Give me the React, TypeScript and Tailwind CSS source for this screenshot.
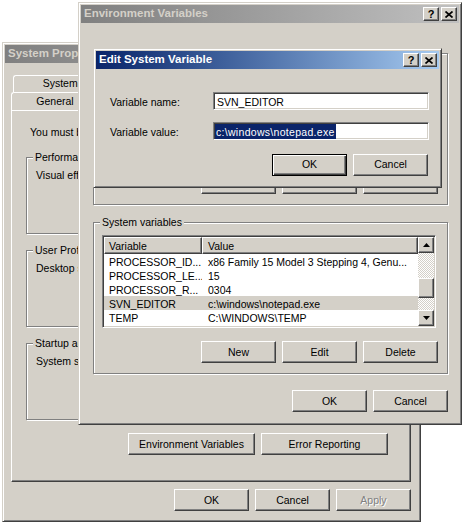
import type { ReactNode } from "react"

const raised =
  "bg-[#d4d0c8] border border-t-white border-l-white border-r-[#404040] border-b-[#404040] shadow-[inset_-1px_-1px_#808080]"
const sunken =
  "border border-t-[#808080] border-l-[#808080] border-r-white border-b-white shadow-[inset_1px_1px_#404040,inset_-1px_-1px_#d4d0c8]"
const groupBox =
  "min-w-0 border border-[#808080] shadow-[inset_1px_1px_#fff,1px_1px_#fff]"

function Btn({ children, wide, def, disabled }: { children: ReactNode; wide?: boolean; def?: boolean; disabled?: boolean }) {
  return (
    <button
      type="button"
      className={`${wide ? "w-[127px]" : "w-[75px]"} h-[22px] pt-[1px] flex items-center justify-center shrink-0 ${
        def
          ? "bg-[#d4d0c8] border border-black shadow-[inset_1px_1px_#fff,inset_-1px_-1px_#404040,inset_-2px_-2px_#808080]"
          : raised
      } ${disabled ? "text-[#808080] [text-shadow:1px_1px_#fff]" : "text-black"}`}
    >
      {children}
    </button>
  )
}

function TitleBar({ title, active }: { title: string; active?: boolean }) {
  return (
    <div
      className={`h-[18px] shrink-0 flex items-center justify-between pl-[3px] pr-[2px] ${
        active
          ? "bg-linear-to-r from-[#0a246a] to-[#a6caf0] text-white"
          : "bg-linear-to-r from-[#808080] to-[#c0c0c0] text-[#d4d0c8]"
      }`}
    >
      <span className="font-bold text-[11.5px] leading-none whitespace-nowrap">{title}</span>
      <div className="flex gap-[2px]">
        <div className={`w-[16px] h-[14px] ${raised} flex items-center justify-center text-black text-[11px] font-bold leading-none`}>?</div>
        <div className={`w-[16px] h-[14px] ${raised} flex items-center justify-center`}>
          <svg width="8" height="7" viewBox="0 0 8 7">
            <path d="M0.5 0.5 7.5 6.5 M7.5 0.5 0.5 6.5" stroke="#000" strokeWidth="1.7" fill="none" />
          </svg>
        </div>
      </div>
    </div>
  )
}

function Win({ className, children }: { className: string; children: ReactNode }) {
  return (
    <div
      className={`absolute flex flex-col bg-[#d4d0c8] border border-t-[#d4d0c8] border-l-[#d4d0c8] border-r-[#404040] border-b-[#404040] shadow-[inset_1px_1px_#fff,inset_-1px_-1px_#808080] p-[2px] ${className}`}
    >
      {children}
    </div>
  )
}

function Arrow({ down }: { down?: boolean }) {
  return (
    <svg width="7" height="4" viewBox="0 0 7 4">
      <path d={down ? "M0 0 7 0 3.5 4Z" : "M3.5 0 7 4 0 4Z"} fill="#000" />
    </svg>
  )
}

type Row = { name: string; value: string; sel?: boolean }

const sysRows: Row[] = [
  { name: "PROCESSOR_ID...", value: "x86 Family 15 Model 3 Stepping 4, Genu..." },
  { name: "PROCESSOR_LE...", value: "15" },
  { name: "PROCESSOR_R...", value: "0304" },
  { name: "SVN_EDITOR", value: "c:\\windows\\notepad.exe", sel: true },
  { name: "TEMP", value: "C:\\WINDOWS\\TEMP" },
  { name: "TMP", value: "C:\\WINDOWS\\TEMP" },
]

const userRows: Row[] = [
  { name: "TEMP", value: "C:\\Documents and Settings\\Admin\\Local..." },
  { name: "TMP", value: "C:\\Documents and Settings\\Admin\\Local..." },
]

function ListView({ rows }: { rows: Row[] }) {
  return (
    <div className={`ml-[8px] mr-[11px] mt-[6px] h-[93px] ${sunken} p-[1px] bg-white flex`}>
      <div className="flex-1 flex flex-col overflow-hidden">
        <div className="flex h-[17px] shrink-0">
          <div className={`w-[98px] ${raised} pl-[4px] leading-[17px] overflow-hidden`}>Variable</div>
          <div className={`flex-1 ${raised} pl-[5px] leading-[17px] overflow-hidden`}>Value</div>
        </div>
        {rows.map((r) => (
          <div key={r.name} className={`flex h-[14px] shrink-0 leading-[16px] whitespace-nowrap ${r.sel ? "bg-[#d4d0c8]" : ""}`}>
            <div className="w-[98px] pl-[5px] overflow-hidden">{r.name}</div>
            <div className="flex-1 pl-[6px] overflow-hidden">{r.value}</div>
          </div>
        ))}
      </div>
      <div className="w-[16px] flex flex-col">
        <div className={`h-[16px] ${raised} flex items-center justify-center`}>
          <Arrow />
        </div>
        <div className="flex-1 flex flex-col bg-[repeating-conic-gradient(#d4d0c8_0_25%,#fff_0_50%)] bg-[length:2px_2px]">
          <div className="h-[25px]" />
          <div className={`h-[20px] ${raised}`} />
        </div>
        <div className={`h-[16px] ${raised} flex items-center justify-center`}>
          <Arrow down />
        </div>
      </div>
    </div>
  )
}

function EnvGroup({ label, rows, className }: { label: string; rows: Row[]; className: string }) {
  return (
    <fieldset className={`${groupBox} ${className}`}>
      <legend className="ml-[6px] px-[2px] leading-[13px] bg-[#d4d0c8]">{label}</legend>
      <ListView rows={rows} />
      <div className="flex justify-end gap-[6px] mt-[13px] pr-[9px] pb-[10px]">
        <Btn>New</Btn>
        <Btn>Edit</Btn>
        <Btn>Delete</Btn>
      </div>
    </fieldset>
  )
}

function PropGroup({ label, text, className }: { label: string; text: string; className: string }) {
  return (
    <fieldset className={`${groupBox} ${className}`}>
      <legend className="ml-[6px] px-[2px] leading-[13px] bg-[#d4d0c8]">{label}</legend>
      <div className="h-[69px] flex flex-col pl-[9px] pr-[8px] pt-[5px] pb-[8px]">
        <div className="leading-[13px] whitespace-nowrap">{text}</div>
        <div className="mt-auto flex justify-end">
          <Btn>Settings</Btn>
        </div>
      </div>
    </fieldset>
  )
}

function Tab({ children, w }: { children: ReactNode; w: string }) {
  return (
    <div
      className={`${w} h-full flex items-center justify-center border-t border-l border-r border-t-white border-l-white border-r-[#404040] rounded-t-[3px] shadow-[inset_-1px_0_#808080] bg-[#d4d0c8] whitespace-nowrap`}
    >
      {children}
    </div>
  )
}

export default function App() {
  return (
    <div className="relative w-[464px] h-[524px] bg-white overflow-hidden text-black text-[10.5px] font-['Liberation_Sans',Arial,sans-serif]">
      {/* System Properties */}
      <Win className="left-[2px] top-[42px] w-[419px] h-[480px]">
        <TitleBar title="System Properties" />
        <div className="mt-[12px] ml-[6px] mr-[7px]">
          <div className="flex h-[17px] pl-[2px]">
            <Tab w="w-[134px]">System Restore</Tab>
            <Tab w="w-[132px]">Automatic Updates</Tab>
            <Tab w="w-[132px]">Remote</Tab>
          </div>
          <div className="flex h-[18px]">
            <Tab w="w-[88px]">General</Tab>
            <Tab w="w-[110px]">Computer Name</Tab>
            <Tab w="w-[96px]">Hardware</Tab>
            <Tab w="w-[106px]">Advanced</Tab>
          </div>
          <div className={`h-[372px] ${raised} flex flex-col px-[14px] pt-[15px]`}>
            <div className="pl-[4px] leading-[13px] whitespace-nowrap">
              You must be logged on as an Administrator to make most of these changes.
            </div>
            <PropGroup className="mt-[12px]" label="Performance" text="Visual effects, processor scheduling, memory usage, and virtual memory" />
            <PropGroup className="mt-[10px]" label="User Profiles" text="Desktop settings related to your logon" />
            <PropGroup className="mt-[10px]" label="Startup and Recovery" text="System startup, system failure, and debugging information" />
            <div className="flex justify-end gap-[6px] mt-[13px] pr-[8px]">
              <Btn wide>Environment Variables</Btn>
              <Btn wide>Error Reporting</Btn>
            </div>
          </div>
        </div>
        <div className="flex justify-end gap-[6px] mt-[7px] mr-[7px]">
          <Btn>OK</Btn>
          <Btn>Cancel</Btn>
          <Btn disabled>Apply</Btn>
        </div>
      </Win>

      {/* Environment Variables */}
      <Win className="left-[78px] top-[2px] w-[384px] h-[423px]">
        <TitleBar title="Environment Variables" />
        <div className="flex flex-col pl-[12px] pr-[11px]">
          <EnvGroup className="mt-[24px]" label="User variables for Administrator" rows={userRows} />
          <EnvGroup className="mt-[11px]" label="System variables" rows={sysRows} />
          <div className="flex justify-end gap-[6px] mt-[16px]">
            <Btn>OK</Btn>
            <Btn>Cancel</Btn>
          </div>
        </div>
      </Win>

      {/* Edit System Variable */}
      <Win className="left-[93px] top-[48px] w-[349px] h-[140px]">
        <TitleBar title="Edit System Variable" active />
        <div className="pl-[14px] pr-[10px] pt-[23px]">
          <div className="grid grid-cols-[103px_1fr] gap-y-[11px] items-center">
            <div className="pt-[3px]">Variable name:</div>
            <div className={`h-[18px] ${sunken} bg-white flex items-center pl-[3px] pt-[2px] whitespace-nowrap`}>SVN_EDITOR</div>
            <div className="pt-[3px]">Variable value:</div>
            <div className={`h-[18px] ${sunken} bg-white flex items-center pl-[1px] whitespace-nowrap`}>
              <span className="bg-[#0a246a] text-white px-[1px] tracking-[0.3px] leading-[14px] pt-[1px]">c:\windows\notepad.exe</span>
            </div>
          </div>
          <div className="flex justify-end gap-[6px] mt-[13px] pr-[1px]">
            <Btn def>OK</Btn>
            <Btn>Cancel</Btn>
          </div>
        </div>
      </Win>
    </div>
  )
}
